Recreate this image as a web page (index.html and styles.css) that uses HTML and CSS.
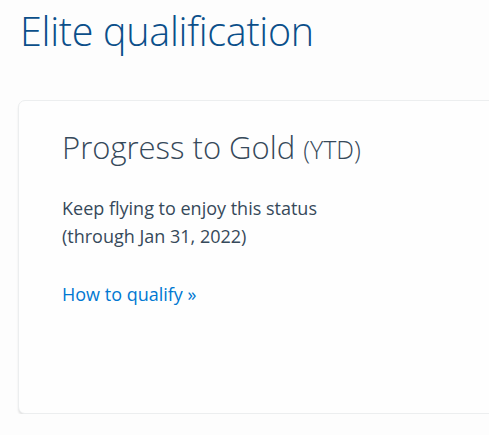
FILE: index.html
```html
<!DOCTYPE html>
<html lang="en">
<head>
<meta charset="utf-8">
<title>Elite qualification</title>
<link rel="stylesheet" href="styles.css">
</head>
<body>
<main class="page">
  <h1 class="page-title">Elite qualification</h1>
  <section class="card">
    <h2 class="card-title">Progress to Gold <span class="ytd">(YTD)</span></h2>
    <p class="status">Keep flying to enjoy this status<br>(through Jan 31, 2022)</p>
    <a class="qualify" href="#">How to qualify »</a>
  </section>
</main>
</body>
</html>
```
FILE: styles.css
```css
html, body {
  margin: 0;
  padding: 0;
  background: #fdfdfd;
}
body {
  font-family: "Open Sans", "Noto Sans", sans-serif;
  overflow: hidden;
}
.page {
  padding: 0 0 0 18px;
  width: 520px;
}
.page-title {
  margin: 0;
  padding: 6px 0 0 2px;
  font-weight: 300;
  font-size: 39.5px;
  line-height: 50px;
  color: #0b4f8a;
  letter-spacing: -0.3px;
}
.card {
  margin-top: 44px;
  height: 314px;
  background: #fefefe;
  border: 1px solid #eceeef;
  border-radius: 7px;
  box-shadow: 0 2px 2px rgba(0,0,0,0.1);
  padding: 24px 0 0 43px;
  box-sizing: border-box;
}
.card-title {
  margin: 0;
  font-weight: 300;
  font-size: 31px;
  line-height: 44px;
  color: #36495a;
}
.ytd {
  font-size: 25px;
}
.status {
  margin: 23px 0 0;
  font-size: 18px;
  line-height: 28px;
  color: #36495a;
}
.qualify {
  display: inline-block;
  margin-top: 30px;
  font-size: 18px;
  line-height: 28px;
  color: #0078d2;
  text-decoration: none;
}
```
